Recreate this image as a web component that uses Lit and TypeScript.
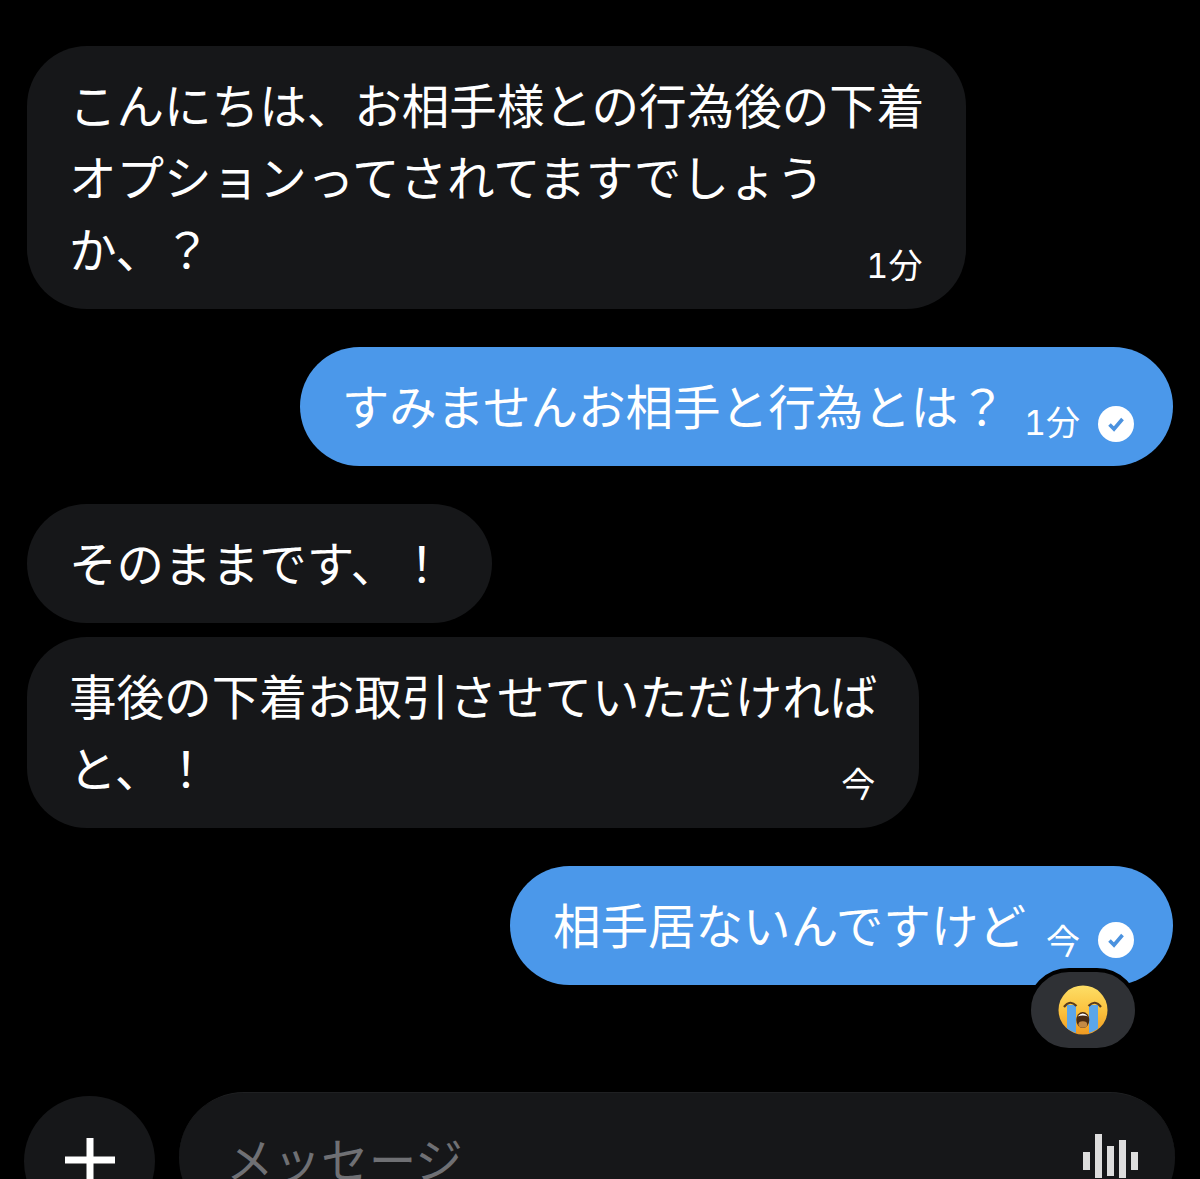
import { LitElement, html, css, svg } from "lit";
import { customElement } from "lit/decorators.js";

const check = html`<svg class="check" viewBox="0 0 36 36" width="36" height="36" aria-hidden="true">
  <circle cx="18" cy="18" r="18" fill="#fff"></circle>
  <path d="M11.5 18.5 L16 23 L24.5 13" fill="none" stroke="#4b92df" stroke-width="3.6"></path>
</svg>`;

const sob = svg`<svg class="sob" viewBox="0 0 50 50" width="50" height="50" aria-hidden="true">
  <defs>
    <linearGradient id="face" x1="0" y1="0" x2="0" y2="1">
      <stop offset="0" stop-color="#fdde66"></stop>
      <stop offset="0.55" stop-color="#fbc03c"></stop>
      <stop offset="1" stop-color="#ef9a22"></stop>
    </linearGradient>
  </defs>
  <circle cx="25" cy="25" r="24.5" fill="url(#face)"></circle>
  <path d="M9 20 H18 V48 Q13 46.5 9 43.5 Z" fill="#5ba6ea"></path>
  <path d="M31 20 H40 V43.5 Q36 46.5 31 48 Z" fill="#5ba6ea"></path>
  <path d="M6 22 Q12 14 18.5 21" fill="none" stroke="#5a3c1c" stroke-width="2.2"></path>
  <path d="M30.5 21 Q37 14 43 22" fill="none" stroke="#5a3c1c" stroke-width="2.2"></path>
  <ellipse cx="24.8" cy="35" rx="6.5" ry="8" fill="#4a2c12"></ellipse>
  <path d="M19.5 31.5 Q24.8 25.5 30 31.5 Q24.8 29.5 19.5 31.5 Z" fill="#fff"></path>
  <ellipse cx="24.8" cy="39.5" rx="4.4" ry="3.3" fill="#c48a45"></ellipse>
</svg>`;

@customElement("app-root")
export class AppRoot extends LitElement {
  static styles = css`
    :host {
      display: block;
      width: 1200px;
      height: 1179px;
      overflow: hidden;
      background: #000;
      font-family: "Noto Sans CJK JP", "Liberation Sans", sans-serif;
      color: #fff;
    }
    .thread {
      display: flex;
      flex-direction: column;
      padding: 46px 27px 0;
      box-sizing: border-box;
      height: 1092px;
    }
    .bubble {
      position: relative;
      box-sizing: border-box;
      border-radius: 60px;
      padding: 22px 42px 25px;
      font-size: 47.55px;
      line-height: 72px;
      white-space: nowrap;
      flex: none;
    }
    .in {
      align-self: flex-start;
      background: #161719;
    }
    .out {
      align-self: flex-end;
      background: #4b98ea;
      display: flex;
      align-items: center;
      padding-right: 39px;
    }
    .gap-l { margin-top: 38px; }
    .gap-s { margin-top: 14px; }
    .short { padding-right: 46px; }
    .time {
      font-family: Inter, "Noto Sans CJK JP", sans-serif;
      font-variant-numeric: tabular-nums;
      font-size: 34px;
      line-height: 40px;
    }
    .in .time {
      position: absolute;
      right: 44px;
      bottom: 23px;
    }
    .out .time { margin: 0 18px 0 20px; position: relative; top: var(--time-drop); }
    .check { position: relative; top: var(--check-drop); display: block; flex: none; }
    .first { --time-drop: 17.5px; --check-drop: 19px; }
    .first .time { margin-left: 18px; }
    .last { --time-drop: 17.5px; --check-drop: 16px; padding-left: 43px; }
    .reaction {
      position: absolute;
      right: 34px;
      top: 102px;
      width: 112px;
      height: 84px;
      box-sizing: border-box;
      border: 4px solid #000;
      border-radius: 42px;
      background: #2f3135;
      display: flex;
      align-items: center;
      justify-content: center;
    }
    .sob { display: block; }
    .composer {
      display: flex;
      align-items: flex-start;
      gap: 24px;
      padding: 0 25px 0 24px;
    }
    .plus {
      flex: none;
      width: 131px;
      height: 131px;
      margin-top: 4px;
      border-radius: 50%;
      background: #161719;
      display: flex;
      justify-content: center;
      padding-top: 39px;
      box-sizing: border-box;
    }
    .plus svg { display: block; }
    .input {
      flex: 1;
      height: 131px;
      border-radius: 65px;
      background: #161719;
      border-top: 1px solid #1f2022;
      box-sizing: border-box;
      display: flex;
      justify-content: space-between;
      padding: 33px 37px 0 47px;
    }
    .ph {
      font-size: 47.55px;
      line-height: 64px;
      color: #6f7074;
    }
    .wave {
      display: block;
      margin-top: 8px;
    }
  `;

  render() {
    return html`
      <div class="thread">
        <div class="bubble in">
          こんにちは、お相手様との行為後の下着<br />オプションってされてますでしょう<br />か、？
          <span class="time">1分</span>
        </div>
        <div class="bubble out gap-l first">
          <span>すみませんお相手と行為とは？</span><span class="time">1分</span>${check}
        </div>
        <div class="bubble in gap-l short">そのままです、！</div>
        <div class="bubble in gap-s">
          事後の下着お取引させていただければ<br />と、！
          <span class="time">今</span>
        </div>
        <div class="bubble out gap-l last">
          <span>相手居ないんですけど</span><span class="time">今</span>${check}
          <div class="reaction">${sob}</div>
        </div>
      </div>
      <div class="composer">
        <div class="plus">
          <svg viewBox="0 0 50 50" width="50" height="50" aria-hidden="true">
            <path d="M0 25 H50 M25 3 V50" stroke="#fff" stroke-width="7"></path>
          </svg>
        </div>
        <div class="input">
          <span class="ph">メッセージ</span>
          <svg class="wave" viewBox="0 0 55 44" width="55" height="44" fill="#ddd" aria-hidden="true">
            <rect x="0" y="18" width="7" height="18"></rect>
            <rect x="12" y="0" width="7" height="44"></rect>
            <rect x="24" y="12" width="7" height="30"></rect>
            <rect x="36" y="6" width="7" height="38"></rect>
            <rect x="48" y="18" width="7" height="18"></rect>
          </svg>
        </div>
      </div>
    `;
  }
}
